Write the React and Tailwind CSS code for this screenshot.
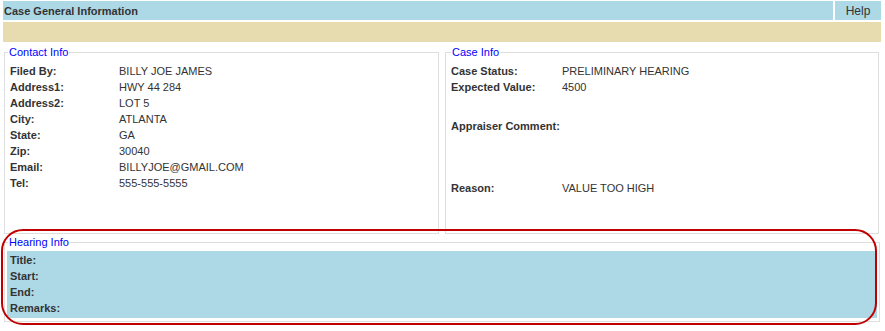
import React from 'react';

const contact = [
  ['Filed By:', 'BILLY JOE JAMES'],
  ['Address1:', 'HWY 44 284'],
  ['Address2:', 'LOT 5'],
  ['City:', 'ATLANTA'],
  ['State:', 'GA'],
  ['Zip:', '30040'],
  ['Email:', 'BILLYJOE@GMAIL.COM'],
  ['Tel:', '555-555-5555'],
];

const Row = ({ label, value, labelW = 'w-[109px]', className = '' }) => (
  <div className={`flex h-4 items-center whitespace-nowrap ${className}`}>
    <span className={`${labelW} shrink-0 font-bold`}>{label}</span>
    <span>{value}</span>
  </div>
);

const App = () => {
  return (
    <div
      className="relative w-[885px] h-[331px] bg-white pt-px pl-[3px] pr-[4px] text-[11px] leading-[14px] text-[#333]"
      style={{ fontFamily: '"Liberation Sans", Arial, sans-serif' }}
    >
      {/* Title bar */}
      <div className="flex gap-[2px] h-[19px]">
        <div className="flex-1 bg-[#add8e6] flex items-center pl-px font-bold">Case General Information</div>
        <div className="w-[46px] bg-[#add8e6] flex items-center justify-center text-[12px]">Help</div>
      </div>
      <div className="mt-[2px] h-[20px] bg-[#e6dcb0]" />

      {/* Contact / Case */}
      <div className="mt-[3px] flex gap-[6px] pl-px pr-[2px]">
        <fieldset className="w-[435px] h-[189px] border border-[#dedede]">
          <legend className="text-[#0000ff] ml-[3px] px-px">Contact Info</legend>
          <div className="mt-[4px] pl-[5px]">
            {contact.map(([l, v]) => (
              <Row key={l} label={l} value={v} />
            ))}
          </div>
        </fieldset>
        <fieldset className="flex-1 h-[189px] border border-[#dedede]">
          <legend className="text-[#0000ff] ml-[5px] px-px">Case Info</legend>
          <div className="mt-[4px] pl-[5px]">
            <Row label="Case Status:" value="PRELIMINARY HEARING" labelW="w-[111px]" />
            <Row label="Expected Value:" value="4500" labelW="w-[111px]" />
            <Row label="Appraiser Comment:" value="" labelW="w-[111px]" className="mt-[23px]" />
            <Row label="Reason:" value="VALUE TOO HIGH" labelW="w-[111px]" className="mt-[46px]" />
          </div>
        </fieldset>
      </div>

      {/* Hearing */}
      <fieldset className="mt-[1px] ml-px mr-px h-[87px] border border-[#dedede] px-[2px]">
        <legend className="text-[#0000ff] ml-[1px] px-px">Hearing Info</legend>
        <div className="mt-[2px] bg-[#add8e6] px-[3px] pt-px pb-[2px] font-bold">
          <div className="h-4 flex items-center">Title:</div>
          <div className="h-4 flex items-center">Start:</div>
          <div className="h-4 flex items-center">End:</div>
          <div className="h-4 flex items-center">Remarks:</div>
        </div>
      </fieldset>

      {/* Red highlight annotation */}
      <div className="absolute left-px top-[229px] w-[876px] h-[96px] border-2 border-[#c00000] rounded-[22px] pointer-events-none" />
    </div>
  );
};

export default App;
